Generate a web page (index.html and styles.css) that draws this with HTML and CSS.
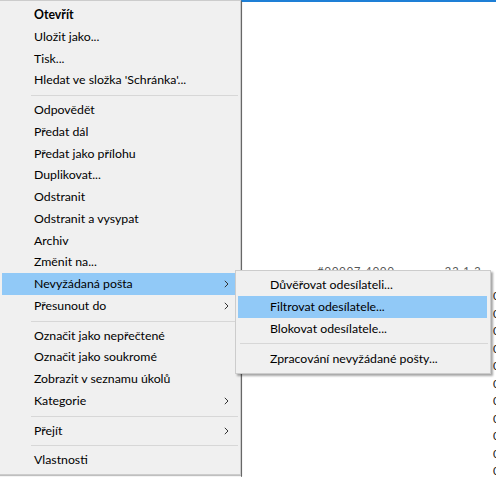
FILE: index.html
```html
<!DOCTYPE html>
<html lang="cs">
<head>
<meta charset="utf-8">
<title>Kontextová nabídka</title>
<link rel="stylesheet" href="styles.css">
</head>
<body>
<div class="stage">
  <div class="list">
    <div class="list-row faint">·· ··  ·· ··  ·· ··  #00007 4000  ·· ··  ·· ··  22.1 2</div>
    <div class="edge-digits">
      <span>0</span><span>0</span><span>0</span><span>0</span><span>0</span><span>0</span><span>0</span><span>0</span><span>0</span><span>0</span><span>0</span>
    </div>
  </div>

  <div class="menu main-menu">
    <div class="item bold">Otevřít</div>
    <div class="item">Uložit jako...</div>
    <div class="item">Tisk...</div>
    <div class="item">Hledat ve složka 'Schránka'...</div>
    <div class="sep"></div>
    <div class="item">Odpovědět</div>
    <div class="item">Předat dál</div>
    <div class="item">Předat jako přílohu</div>
    <div class="item">Duplikovat...</div>
    <div class="item">Odstranit</div>
    <div class="item">Odstranit a vysypat</div>
    <div class="item">Archiv</div>
    <div class="item">Změnit na...</div>
    <div class="item active">Nevyžádaná pošta<svg class="chev" viewBox="0 0 5 8"><polyline points="0.8,0.8 4,4 0.8,7.2"/></svg></div>
    <div class="item">Přesunout do<svg class="chev" viewBox="0 0 5 8"><polyline points="0.8,0.8 4,4 0.8,7.2"/></svg></div>
    <div class="sep"></div>
    <div class="item">Označit jako nepřečtené</div>
    <div class="item">Označit jako soukromé</div>
    <div class="item">Zobrazit v seznamu úkolů</div>
    <div class="item">Kategorie<svg class="chev" viewBox="0 0 5 8"><polyline points="0.8,0.8 4,4 0.8,7.2"/></svg></div>
    <div class="sep"></div>
    <div class="item">Přejít<svg class="chev" viewBox="0 0 5 8"><polyline points="0.8,0.8 4,4 0.8,7.2"/></svg></div>
    <div class="sep"></div>
    <div class="item">Vlastnosti</div>
  </div>

  <div class="menu sub-menu">
    <div class="item">Důvěřovat odesílateli...</div>
    <div class="item active">Filtrovat odesílatele...</div>
    <div class="item">Blokovat odesílatele...</div>
    <div class="sep sub-sep"></div>
    <div class="item">Zpracování nevyžádané pošty...</div>
  </div>
</div>
</body>
</html>
```

FILE: styles.css
```css
html, body {
  margin: 0;
  padding: 0;
  background: #ffffff;
}

.stage {
  position: relative;
  width: 496px;
  height: 477px;
  overflow: hidden;
  background: #ffffff;
  font-family: "Lato", "Noto Sans", "Liberation Sans", sans-serif;
  font-size: 12.3px;
  color: #000000;
}

.list {
  position: absolute;
  left: 241px;
  top: 0;
  right: 0;
  bottom: 0;
  border-top: 2px solid #1e7fd6;
  border-left: 1px solid #8a8a8a;
  background: #ffffff;
}

.list-row {
  position: absolute;
  left: 6px;
  top: 262px;
  font-size: 11px;
  white-space: nowrap;
  letter-spacing: 1px;
}

.faint {
  color: #555555;
}

.edge-digits {
  position: absolute;
  left: 251px;
  top: 285px;
  display: flex;
  flex-direction: column;
  font-size: 12px;
  line-height: 17.5px;
  color: #222222;
}

.menu {
  position: absolute;
  box-sizing: border-box;
  background: #f0f0f0;
  border: 1px solid #cccccc;
  padding: 3px 2px;
  display: flex;
  flex-direction: column;
}

.main-menu {
  left: -1px;
  top: 0;
  width: 242px;
  box-shadow: 1px 1px 1px rgba(0, 0, 0, 0.25);
}

.sub-menu {
  left: 235px;
  top: 270px;
  width: 256px;
  box-shadow: 2px 2px 2px rgba(0, 0, 0, 0.35);
}

.item {
  position: relative;
  height: 21.75px;
  line-height: 21.75px;
  padding-left: 32px;
  white-space: nowrap;
}

.bold {
  font-weight: 700;
}

.item.active {
  background: #91c9f7;
}

.main-menu .item {
  margin-right: 3px;
}

.sub-menu .item {
  margin-right: 1px;
}

.chev {
  position: absolute;
  right: 6px;
  top: 7px;
  width: 5px;
  height: 8px;
  fill: none;
  stroke: #333333;
  stroke-width: 1;
}

.sep {
  height: 8px;
  margin-left: 29px;
  margin-right: 0;
  position: relative;
}

.sep::after {
  content: "";
  position: absolute;
  left: 0;
  right: 0;
  top: 4px;
  height: 1px;
  background: #d7d7d7;
}

.sub-sep {
  margin-left: 2px;
  height: 8.5px;
}
```
